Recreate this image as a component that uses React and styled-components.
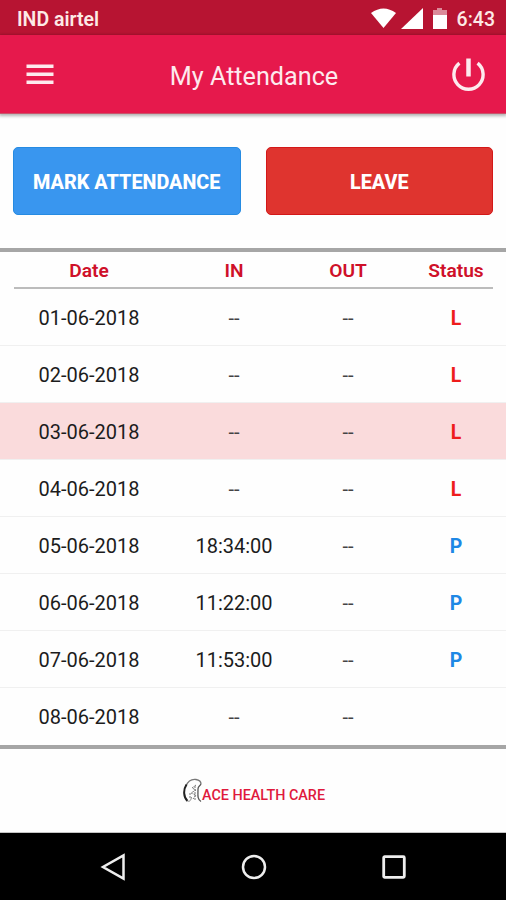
import React from "react";
import styled, {createGlobalStyle} from "styled-components";

const GlobalStyle = createGlobalStyle`
  * {
    box-sizing: border-box;
  }

  body {
    margin: 0;
    background: #fff;
    font-family: Roboto, "Liberation Sans", sans-serif;
  }
`

const Screen = styled.div`
  display: flex;
  flex-direction: column;
  width: 506px;
  height: 900px;
  overflow: hidden;
  background: #fefefe;
`

const StatusBar = styled.div`
  display: flex;
  align-items: center;
  height: 35px;
  padding: 3px 11px 0 17px;
  background: #b71432;
  color: #fdeae6;
  font-weight: 500;
`

const Carrier = styled.span`
  flex: 1;
  font-size: 19.5px;
  font-weight: 600;
`

const StatusIcons = styled.svg`
  display: block;
  margin-right: 9px;
`

const Clock = styled.span`
  font-size: 19.5px;
`

const TitleBar = styled.header`
  display: flex;
  align-items: center;
  justify-content: space-between;
  flex: none;
  height: 79px;
  padding: 0 20px 0 26px;
  background: #e6194c;
  border-bottom: 1px solid #c9536b;
  box-shadow: 0 1px 3px 1px rgba(0, 0, 0, 0.3);
`

const Title = styled.h1`
  margin: 5px 4px 0 0;
  color: #fdeaee;
  font-size: 25.2px;
  font-weight: 400;
  line-height: 30px;
`

const IconButton = styled.button`
  display: flex;
  width: 34px;
  padding: 0;
  border: 0;
  background: none;
`

const Actions = styled.div`
  display: flex;
  gap: 25px;
  flex: none;
  height: 134px;
  padding: 33px 13px 0;
`

const ActionButton = styled.button`
  flex: 1;
  height: 68px;
  padding: 2px 0 0;
  border: 1px solid ${({$edge}) => $edge};
  border-radius: 5px;
  background: ${({$fill}) => $fill};
  color: #fff;
  font-family: inherit;
  font-size: 19.8px;
  font-weight: 800;
`

const Rule = styled.div`
  flex: none;
  height: 4px;
  background: #a6a6a6;
`

const Columns = styled.div`
  display: grid;
  grid-template-columns: 178px 112px 116px 100px;
  align-items: center;
  text-align: center;
`

const TableHead = styled.div`
  flex: none;
  height: 37px;
  background: linear-gradient(#bcbcbc, #bcbcbc) 14px 35px / 479px 2px no-repeat;
`

const HeadCells = styled(Columns)`
  height: 36px;
  padding-top: 1px;
  color: #cf1029;
  font-size: 19.2px;
  font-weight: 600;
`

const Row = styled(Columns)`
  flex: none;
  height: 57px;
  padding-top: 2px;
  border-bottom: 1px solid #f0f0f0;
  background: ${({$holiday}) => $holiday ? '#fadbdc' : 'transparent'};
  color: #1c1c1c;
  font-size: 20px;

  &:last-child {
    border-bottom-color: transparent;
  }
`

const Time = styled.span`
  color: ${({$empty}) => $empty ? '#444' : 'inherit'};
`

const Status = styled.span`
  color: ${({$code}) => $code === 'P' ? '#1e88e5' : '#ee1c1c'};
  font-size: 19.5px;
  font-weight: 700;
`

const Footer = styled.footer`
  display: flex;
  align-items: center;
  justify-content: center;
  flex: none;
  height: 84px;
  padding-left: 2px;
  border-bottom: 1px solid #c4c4c4;
`

const Brand = styled.span`
  padding-top: 10px;
  color: #e0193c;
  font-size: 14.4px;
  font-weight: 500;
`

const NavBar = styled.nav`
  display: flex;
  align-items: center;
  justify-content: space-between;
  flex: 1;
  padding: 0 99px 0 100px;
  background: #000;
`

const DAYS = [
    {date: '01-06-2018', status: 'L'},
    {date: '02-06-2018', status: 'L'},
    {date: '03-06-2018', status: 'L', holiday: true},
    {date: '04-06-2018', status: 'L'},
    {date: '05-06-2018', time: '18:34:00', status: 'P'},
    {date: '06-06-2018', time: '11:22:00', status: 'P'},
    {date: '07-06-2018', time: '11:53:00', status: 'P'},
    {date: '08-06-2018'},
]

const KidneyLogo = () => (
    <svg width="19" height="25" viewBox="0 0 19 25" fill="none">
        <path d="M3 8C5 3 9 1 13 1.5C16 2 18 4 18 6" stroke="#777" strokeWidth="1.3"/>
        <path d="M3.5 6.5C0 12 .5 19 4.5 23" stroke="#222" strokeWidth="2"/>
        <path d="M4.5 23C7 24 8 22 8.5 19" stroke="#888"/>
        <path d="M18 6C17 8 15 8 15 11C15 17 14 21 18 23.5" stroke="#555" strokeWidth="1.3"/>
        <path d="M13 7L9 10L13 12L8 15L13 17L10 21M12 8V23M7 15V21" stroke="#777" strokeDasharray="2 1"/>
    </svg>
)

const App = () => (
    <Screen>
        <GlobalStyle/>
        <StatusBar>
            <Carrier>IND airtel</Carrier>
            <StatusIcons width="77" height="22" viewBox="0 0 77 22" fill="#fff">
                <path d="M0 5Q12.5 -4 25 5L12.5 20Z"/>
                <path d="M30 21L52 0V21Z"/>
                <path d="M62 2H66V0H71V2H76V7H62Z" opacity=".5"/>
                <path d="M62 7H76V21H62Z"/>
            </StatusIcons>
            <Clock>6:43</Clock>
        </StatusBar>
        <TitleBar>
            <IconButton aria-label="Menu">
                <svg width="28" height="21" viewBox="0 0 28 21" fill="#fdeaee">
                    <path d="M.5 .5H27.5V4H.5ZM.5 8.5H27.5V12H.5ZM.5 16.5H27.5V20H.5Z"/>
                </svg>
            </IconButton>
            <Title>My Attendance</Title>
            <IconButton aria-label="Log out">
                <svg width="34" height="34" viewBox="0 0 34 34" fill="none" stroke="#fdeaee">
                    <path d="M7.4 6.2A14.6 14.6 0 1 0 25.6 6.2" strokeWidth="3.4"/>
                    <path d="M16.5 1.5V19.5" strokeWidth="4.5"/>
                </svg>
            </IconButton>
        </TitleBar>
        <Actions>
            <ActionButton $fill="#3996ef" $edge="#268be2">MARK ATTENDANCE</ActionButton>
            <ActionButton $fill="#df342f" $edge="#d31818">LEAVE</ActionButton>
        </Actions>
        <Rule/>
        <TableHead>
            <HeadCells>
                <span>Date</span>
                <span>IN</span>
                <span>OUT</span>
                <span>Status</span>
            </HeadCells>
        </TableHead>
        <div>
            {DAYS.map(({date, time, status, holiday}) => (
                <Row key={date} $holiday={holiday}>
                    <span>{date}</span>
                    <Time $empty={!time}>{time || '--'}</Time>
                    <Time $empty>--</Time>
                    <Status $code={status}>{status}</Status>
                </Row>
            ))}
        </div>
        <Rule/>
        <Footer>
            <KidneyLogo/>
            <Brand>ACE HEALTH CARE</Brand>
        </Footer>
        <NavBar>
            <svg width="26" height="28" viewBox="0 0 26 28" fill="none" stroke="#eee" strokeWidth="2.5">
                <path d="M23.5 2.5V25.5L3 14Z"/>
            </svg>
            <svg width="26" height="26" viewBox="0 0 26 26" fill="none" stroke="#eee" strokeWidth="2.5">
                <circle cx="13" cy="13" r="11"/>
            </svg>
            <svg width="26" height="26" viewBox="0 0 26 26" fill="none" stroke="#eee" strokeWidth="2.8">
                <rect x="2.7" y="2.7" width="20.6" height="20.6" rx="1"/>
            </svg>
        </NavBar>
    </Screen>
)

export default App
